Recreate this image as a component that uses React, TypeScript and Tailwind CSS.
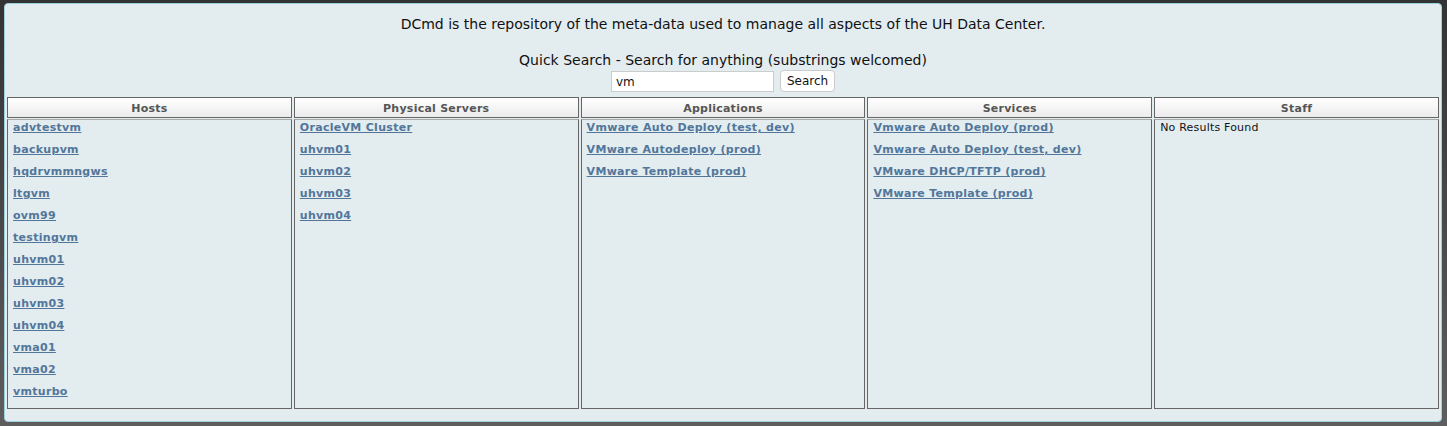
const hosts = [
  "advtestvm",
  "backupvm",
  "hqdrvmmngws",
  "ltgvm",
  "ovm99",
  "testingvm",
  "uhvm01",
  "uhvm02",
  "uhvm03",
  "uhvm04",
  "vma01",
  "vma02",
  "vmturbo",
];

const columns: { title: string; items: string[] }[] = [
  { title: "Hosts", items: hosts },
  {
    title: "Physical Servers",
    items: ["OracleVM Cluster", "uhvm01", "uhvm02", "uhvm03", "uhvm04"],
  },
  {
    title: "Applications",
    items: [
      "Vmware Auto Deploy (test, dev)",
      "VMware Autodeploy (prod)",
      "VMware Template (prod)",
    ],
  },
  {
    title: "Services",
    items: [
      "Vmware Auto Deploy (prod)",
      "Vmware Auto Deploy (test, dev)",
      "VMware DHCP/TFTP (prod)",
      "VMware Template (prod)",
    ],
  },
  { title: "Staff", items: [] },
];

export default function App() {
  return (
    <div className="h-[426px] w-full bg-gradient-to-b from-[#333333] to-[#5e5e5e] pl-[4px] pr-[5px] pt-[3px] font-['DejaVu_Sans',Verdana,sans-serif]">
      <div className="h-[419px] rounded-[4px] border border-[#9fd0df] bg-[#e3ecef] pl-[2px] pr-[2px]">
        <p className="mt-[11px] text-center text-[14px] leading-[18px] text-[#111]">
          DCmd is the repository of the meta-data used to manage all aspects of the UH Data Center.
        </p>
        <p className="mt-[18px] text-center text-[14px] leading-[18px] text-[#111]">
          Quick Search - Search for anything (substrings welcomed)
        </p>
        <div className="mt-[1px] flex items-center justify-center gap-[6px]">
          <input
            defaultValue="vm"
            className="h-[21px] w-[163px] border border-[#ccc] bg-white px-[4px] pt-[1px] text-[12px] text-[#111] outline-none"
          />
          <button className="h-[22px] rounded-[4px] border border-[#ccc] bg-white px-[6px] text-[12px] text-[#111]">
            Search
          </button>
        </div>
        <div className="mt-[5px] grid grid-cols-5 gap-[2px]">
          {columns.map((col) => (
            <div key={col.title} className="flex flex-col gap-[1px]">
              <div className="h-[21px] border border-[#666] bg-gradient-to-b from-white to-[#ececec] pt-[1px] text-center text-[11px] font-bold leading-[19px] tracking-[0.25px] text-[#555]">
                {col.title}
              </div>
              <div className="h-[290px] border border-[#666] border-t-[#aaa] px-[5px]">
                {col.items.length === 0 ? (
                  <div className="text-[11px] leading-[16px] tracking-[0.2px] text-[#111]">No Results Found</div>
                ) : (
                  col.items.map((item) => (
                    <div key={item} className="h-[22px] text-[11px] leading-[16px] tracking-[0.3px]">
                      <a href="#" className="font-bold text-[#52769a] underline">
                        {item}
                      </a>
                    </div>
                  ))
                )}
              </div>
            </div>
          ))}
        </div>
      </div>
    </div>
  );
}
